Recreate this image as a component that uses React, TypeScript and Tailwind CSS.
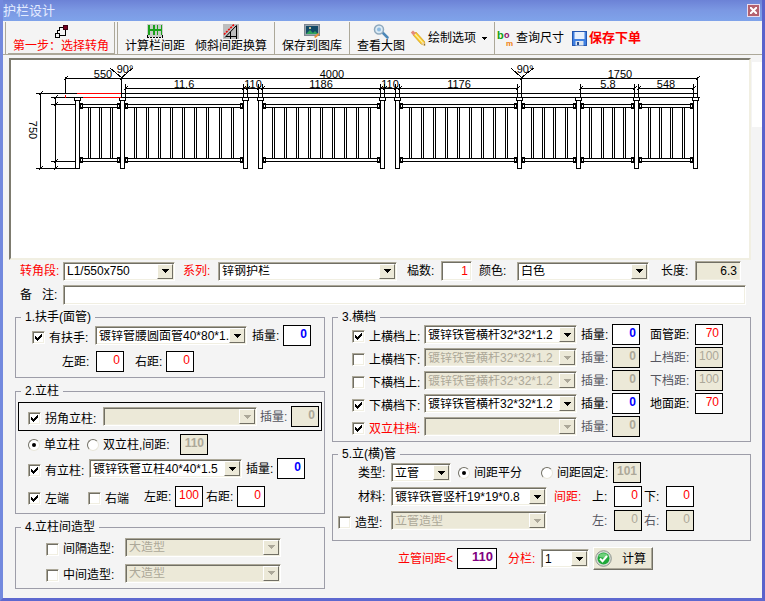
import type { ReactNode } from 'react';
import clsx from 'clsx';

const sunken =
  'border border-t-[#aca899] border-l-[#aca899] border-r-white border-b-white shadow-[inset_1px_1px_0_#716f64,inset_-1px_-1px_0_#f1efe2]';

const STEEL_RAIL = '镀锌铁管横杆32*32*1.2';

function Select({ name, value, disabled, className }: { name: string; value: string; disabled?: boolean; className?: string }) {
  return (
    <div className={clsx('relative h-[19px]', className)}>
      <select
        aria-label={name}
        disabled={disabled}
        className={clsx(
          'block h-full w-full appearance-none overflow-hidden pl-[3px] pr-4 leading-none opacity-100 outline-none',
          sunken,
          disabled ? 'bg-[#ece9d8] text-[#aca899]' : 'bg-white text-black'
        )}
      >
        <option>{value}</option>
      </select>
      <span className="pointer-events-none absolute top-[2px] right-[2px] bottom-[2px] flex w-4 items-center justify-center border border-t-white border-l-white border-r-[#716f64] border-b-[#716f64] bg-[#ece9d8]">
        <svg width="7" height="4" viewBox="0 0 7 4" shapeRendering="crispEdges">
          <path d="M0 0h7v1H0zM1 1h5v1H1zM2 2h3v1H2zM3 3h1v1H3z" fill={disabled ? '#aca899' : '#000'} />
        </svg>
      </span>
    </div>
  );
}

interface NumProps {
  label: string;
  value: string;
  labelClass?: string;
  boxClass?: string;
  className?: string;
  disabled?: boolean;
}

function Num({ label, value, labelClass = 'w-[31px]', boxClass = 'w-7', className, disabled }: NumProps) {
  return (
    <label className={clsx('flex flex-none items-center', className)}>
      <span className={clsx('flex-none whitespace-nowrap', labelClass, disabled && 'text-[#55555f]')}>{label}</span>
      <input
        defaultValue={value}
        disabled={disabled}
        className={clsx(
          'h-[21px] border border-black pr-[3px] pb-1 text-right outline-none',
          boxClass,
          disabled ? 'bg-[#ece9d8] text-[#aca899]' : 'bg-white',
          !disabled && !boxClass.includes('text-') && 'text-[#f00]'
        )}
      />
    </label>
  );
}

function Check({ label, checked, className }: { label: string; checked?: boolean; className?: string }) {
  return (
    <label className={clsx('flex flex-none items-center gap-1 whitespace-nowrap pt-1', className)}>
      <span className="relative flex-none">
        <input type="checkbox" defaultChecked={checked} className={clsx('peer block h-[13px] w-[13px] appearance-none bg-white', sunken)} />
        <svg className="pointer-events-none absolute top-[3px] left-[3px] opacity-0 peer-checked:opacity-100" width="7" height="7" viewBox="0 0 7 7" shapeRendering="crispEdges">
          <path d="M0 2h1v3H0zM1 3h1v3H1zM2 4h1v3H2zM3 3h1v3H3zM4 2h1v3H4zM5 1h1v3H5zM6 0h1v3H6z" />
        </svg>
      </span>
      {label}
    </label>
  );
}

function Radio({ label, name, checked, className }: { label: string; name: string; checked?: boolean; className?: string }) {
  return (
    <label className={clsx('flex flex-none items-center gap-1 whitespace-nowrap pt-px', className)}>
      <span className="relative flex-none">
        <input
          type="radio"
          name={name}
          defaultChecked={checked}
          className="peer block h-3 w-3 appearance-none rounded-full border border-t-[#716f64] border-l-[#716f64] border-r-[#e8e6da] border-b-[#e8e6da] bg-white"
        />
        <span className="pointer-events-none absolute top-1 left-1 h-1 w-1 rounded-full bg-black opacity-0 peer-checked:opacity-100" />
      </span>
      {label}
    </label>
  );
}

function Group({ title, className, children }: { title: string; className?: string; children: ReactNode }) {
  return (
    <fieldset className="min-w-0 border border-[#9d9da8]">
      <legend className="ml-[5px] h-[14px] px-1 leading-[14px]">{title}</legend>
      <div className={clsx('flex flex-col', className)}>{children}</div>
    </fieldset>
  );
}

function Sep() {
  return <span className="mx-[2px] w-px flex-none bg-[#aca899]" />;
}

function Tool({ icon, children, className }: { icon: ReactNode; children: ReactNode; className?: string }) {
  return (
    <button className={clsx('flex flex-none flex-col items-center px-[5px] pt-[2px]', className)}>
      {icon}
      <span className="leading-[14px] whitespace-nowrap">{children}</span>
    </button>
  );
}

function CornerIcon() {
  return (
    <svg width="16" height="15" viewBox="0 0 16 15" shapeRendering="crispEdges" fill="none" stroke="#000">
      <path d="M2.500 9.500h4v4h-4z" />
      <path d="M4.500 9V6.500h2v-3H10M12.500 6v5.500H7" />
      <path d="M10.500 1.500h4v4h-4z" fill="#7a0020" stroke="#3c0010" />
    </svg>
  );
}

function SpacingIcon() {
  return (
    <svg width="16" height="15" viewBox="0 0 16 15" shapeRendering="crispEdges">
      <path d="M0 0h16v13H0z" fill="#c9cdc9" />
      <path d="M1 1h2v10H1zM6 1h2v10H6zM10 1h1v10h-1zM14 1h1v10h-1zM1 5h14v2H1z" fill="#1aa01a" />
      <path d="M0 13.500h16" stroke="#000" strokeDasharray="2 1" />
      <path d="M.5 11v3M15.500 11v3" stroke="#000" />
    </svg>
  );
}

function SlopeIcon() {
  return (
    <svg width="16" height="15" viewBox="0 0 16 15">
      <path d="M0 0h16v15H0z" fill="#bdbdbd" />
      <path d="M2 13.500L13.500 1.500V15M7.500 8v7M3 12.500h11" fill="none" stroke="#000" />
      <path d="M1 10.500L11 .5" stroke="#e00" strokeWidth="1.500" strokeDasharray="2 1" />
    </svg>
  );
}

function GalleryIcon() {
  return (
    <svg width="16" height="15" viewBox="0 0 16 15">
      <rect x=".5" y=".5" width="15" height="11" fill="#9aa4ae" stroke="#7d8790" />
      <rect x="2" y="2" width="12" height="8" fill="#124a66" />
      <path d="M2 10l4-4 3 3 2-2 3 3z" fill="#2fa35a" />
      <circle cx="6" cy="4" r="1" fill="#ffe9a0" />
      <path d="M10 13l4-4 1.500 1.500-4 3.500z" fill="#e8913a" />
    </svg>
  );
}

function MagnifierIcon() {
  return (
    <svg width="16" height="15" viewBox="0 0 16 15" fill="none">
      <path d="M9.500 8.500l5 5" stroke="#4d88b8" strokeWidth="2.500" strokeLinecap="round" />
      <circle cx="6" cy="5.500" r="4.500" fill="#dcebf5" stroke="#8fa9bd" strokeWidth="1.500" />
      <circle cx="6" cy="5.500" r="2" fill="#8dbbe0" />
    </svg>
  );
}

function PencilIcon() {
  return (
    <svg width="16" height="16" viewBox="0 0 16 16">
      <path d="M3 5l3-3 8.500 9.500.5 4-4-1.500z" fill="#f8c828" stroke="#c99218" strokeWidth=".6" />
      <path d="M4.500 3.500l9 10" stroke="#fdf0a0" strokeWidth="1.200" />
      <path d="M.8 2.500L3 .6l3 2.600-2.700 2.300z" fill="#e58b7c" />
      <path d="M11 14l2.800-2.300 1.200 3.800z" fill="#ecd0a0" />
      <path d="M13.800 14.800l.9-.7.4 1.500z" fill="#333" />
    </svg>
  );
}

function BomIcon() {
  return (
    <svg width="18" height="20" viewBox="0 0 18 20" className="font-bold">
      <text x="0" y="11" fontSize="11" fill="#10a010">b</text>
      <text x="7" y="10" fontSize="9" fill="#8b1060">o</text>
      <text x="9" y="18" fontSize="8" fill="#f08010">m</text>
    </svg>
  );
}

function DiskIcon() {
  return (
    <svg width="15" height="15" viewBox="0 0 15 15">
      <rect x=".5" y=".5" width="14" height="14" fill="#3f7fe0" stroke="#2457b0" />
      <path d="M2.500 1h10v7h-10z" fill="#e6f0fd" />
      <path d="M3.500 10h8v4.500h-8z" fill="#dfe6ee" />
      <path d="M5 11h2v3H5z" fill="#2b4f90" />
    </svg>
  );
}

function OkIcon() {
  return (
    <svg width="17" height="17" viewBox="0 0 17 17">
      <circle cx="8.500" cy="8.500" r="7.800" fill="#d8dcd8" stroke="#8d958d" />
      <circle cx="8.500" cy="8.500" r="6" fill="#1fa83a" />
      <path d="M3.500 6.500a5.500 5.500 0 0 1 10 0c-3 1.500-7 1.500-10 0z" fill="#6fd07c" />
      <path d="M5 8.500l2.500 2.700L12 6" fill="none" stroke="#fff" strokeWidth="2" />
    </svg>
  );
}

// [left post x, right post x, baluster x positions]
const PANELS: [number, number, number[]][] = [
  [75, 120, [88, 99, 110]],
  [120, 243, [134, 146, 158, 170, 182, 194, 206, 219, 231]],
  [258, 380, [272, 284, 296, 308, 320, 332, 344, 356, 368]],
  [395, 517, [409, 421, 433, 445, 457, 469, 481, 493, 505]],
  [517, 576, [531, 542, 553, 565]],
  [576, 634, [589, 601, 612, 623]],
  [634, 693, [648, 659, 670, 682]],
];
const POSTS = [75, 120, 243, 258, 380, 395, 517, 576, 634, 693];
const MARKS = [125, 243, 247, 258, 262, 380, 384, 395, 399, 517, 580, 634, 638, 693];
const DIMS: [number, number, string][] = [
  [103, 78, '550'],
  [332, 78, '4000'],
  [620, 78, '1750'],
  [184, 88, '11.6'],
  [253, 88, '110'],
  [321, 88, '1186'],
  [390, 88, '110'],
  [459, 88, '1176'],
  [608, 88, '5.8'],
  [666, 88, '548'],
  [125, 73, '90°'],
  [525, 73, '90°'],
];

function Fence() {
  return (
    <svg viewBox="11 60 738 198" className="block w-full" fill="none" stroke="#000">
      <g shapeRendering="crispEdges" transform="translate(.5 .5)">
        <path d="M65 78H697M125 88H517M580 88H634M638 88H693M35 93H76M121 93H697M50 97H82M121 97H699M50 104H79M50 161H75M35 168H76" />
        <path d="M65 76V93M121 77V97M521 77V97M697 76V97M40 93V168M55 97V168" />
        {MARKS.map((x) => (
          <path key={x} d={`M${x} 83V97M${x - 2} 90l4 -4`} />
        ))}
        {[65, 121, 521, 697].map((x) => (
          <path key={x} d={`M${x - 2} 80l4 -4`} />
        ))}
        {[93, 168].map((y) => (
          <path key={y} d={`M38 ${y + 2}l4 -4`} />
        ))}
        {[97, 104, 161, 168].map((y) => (
          <path key={y} d={`M53 ${y + 2}l4 -4`} />
        ))}
        <path d="M110 68L121 77L133 67M511 68L521 77L534 67" />
        {PANELS.map(([left, right, bars]) => (
          <g key={left}>
            <path d={`M${left + 4} 104H${right}M${left + 4} 107H${right}M${left + 4} 158H${right}M${left + 4} 161H${right}`} />
            {[103, 157].map((y) => (
              <path key={y} d={`M${left + 5} ${y}h2v5h-2zM${right - 3} ${y}h2v5h-2z`} />
            ))}
            {bars.map((x) => (
              <path key={x} d={`M${x} 107V158M${x + 2} 107V158`} />
            ))}
          </g>
        ))}
        {POSTS.map((x) => (
          <path key={x} d={`M${x} 100h4v68h-4zM${x - 1} 97h6v3h-6z`} fill="#fff" />
        ))}
        <path d="M76 93H120M82 97H120M65 94V97" stroke="#f00" />
      </g>
      <g fill="#000" stroke="none" fontSize="11" textAnchor="middle">
        {DIMS.map(([x, y, text]) => (
          <text key={x} x={x} y={y}>
            {text}
          </text>
        ))}
        <text transform="translate(29 130) rotate(90)">750</text>
      </g>
    </svg>
  );
}

const CROSSBARS = [
  { name: '上横档上:', on: true, gap: '面管距:', dist: '70' },
  { name: '上横档下:', on: false, gap: '上档距:', dist: '100' },
  { name: '下横档上:', on: false, gap: '下档距:', dist: '100' },
  { name: '下横档下:', on: true, gap: '地面距:', dist: '70' },
];

const blueBox = 'w-7 font-bold text-[#00f]';

export default function App() {
  return (
    <div className="flex min-h-screen flex-col border-x-[3px] border-b-[3px] border-l-[#7389de] border-r-[#5a62cb] border-b-[#5d68cf] bg-[#f4f4f4] font-['Liberation_Sans','Noto_Sans_CJK_SC',sans-serif] text-[12px] leading-4 text-black">
      <header className="flex h-[21px] items-center justify-between bg-linear-to-b from-[#6c82d6] via-[#7b98e3] to-[#7fa3ea] pr-[2px]">
        <h1 className="text-[13px] text-[#e3ebff]">护栏设计</h1>
        <button aria-label="×" className="flex h-[13px] w-[13px] items-center justify-center border border-[#e8dcee] bg-[#b4606e]">
          <svg width="7" height="7" viewBox="0 0 7 7" stroke="#fff" strokeWidth="2">
            <path d="M0 0l7 7M7 0L0 7" />
          </svg>
        </button>
      </header>

      <nav className="flex h-[34px] items-stretch border-b border-[#aca899] pt-px">
        <Sep />
        <Tool icon={<CornerIcon />} className="border-r border-b border-[#aca899] text-[#f00]">
          第一步：选择转角
        </Tool>
        <Sep />
        <Tool icon={<SpacingIcon />}>计算栏间距</Tool>
        <Tool icon={<SlopeIcon />}>倾斜间距换算</Tool>
        <Sep />
        <Tool icon={<GalleryIcon />}>保存到图库</Tool>
        <Sep />
        <Tool icon={<MagnifierIcon />}>查看大图</Tool>
        <button className="flex flex-none items-center gap-[2px] pr-[5px] whitespace-nowrap">
          <PencilIcon />
          绘制选项
          <svg className="ml-1" width="5" height="3" viewBox="0 0 5 3" shapeRendering="crispEdges">
            <path d="M0 0h5v1H0zM1 1h3v1H1zM2 2h1v1H2z" />
          </svg>
        </button>
        <Sep />
        <button className="flex flex-none items-center gap-px whitespace-nowrap">
          <BomIcon />
          查询尺寸
        </button>
        <button className="ml-2 flex flex-none items-center gap-[2px] text-[13px] font-bold whitespace-nowrap text-[#f00]">
          <DiskIcon />
          保存下单
        </button>
      </nav>

      <div className="mt-[3px] flex gap-px pl-[6px]">
        <div className="min-w-0 flex-1 border-2 border-t-[#7d7b6f] border-l-[#7d7b6f] border-r-[#f1efe2] border-b-[#f1efe2] bg-white">
          <Fence />
        </div>
        <div className="mt-1 h-[65px] w-[10px] flex-none bg-white" />
      </div>

      <main className="pt-px pr-[11px] pl-3">
        <div className="flex h-5 items-center pr-[10px] pl-[5px]">
          <span className="w-[43px] flex-none text-[#f00]">转角段:</span>
          <Select name="转角段" value="L1/550x750" className="w-[112px] flex-none" />
          <span className="ml-2 w-[35px] flex-none text-[#f00]">系列:</span>
          <Select name="系列" value="锌钢护栏" className="min-w-0 flex-1" />
          <label className="ml-[10px] flex flex-none items-center">
            <span className="w-[34px]">榀数:</span>
            <input defaultValue="1" className={clsx('h-5 w-[31px] bg-white pr-[3px] text-right text-[#f00]', sunken)} />
          </label>
          <span className="ml-[7px] w-[38px] flex-none">颜色:</span>
          <Select name="颜色" value="白色" className="w-[132px] flex-none" />
          <label className="ml-3 flex flex-none items-center">
            <span className="w-[34px]">长度:</span>
            <input defaultValue="6.3" readOnly className={clsx('h-5 w-[46px] bg-[#ece9d8] pr-[3px] text-right', sunken)} />
          </label>
        </div>
        <label className="mt-1 flex items-center pr-[5px] pl-[5px]">
          <span className="w-[43px] flex-none whitespace-pre">{'备   注:'}</span>
          <input className={clsx('h-5 min-w-0 flex-1 bg-white px-1', sunken)} />
        </label>

        <div className="mt-[5px] flex gap-[7px]">
          <div className="flex min-w-0 flex-[310] flex-col gap-[6px]">
            <Group title="1.扶手(面管)" className="gap-[5px] pt-px pb-[5px]">
              <div className="flex items-center pr-[13px] pl-4">
                <Check label="有扶手:" checked className="w-[63px]" />
                <Select name="有扶手" value="镀锌管腰圆面管40*80*1." className="min-w-0 flex-1" />
                <Num label="插量:" value="0" boxClass={blueBox} className="ml-[5px]" />
              </div>
              <div className="flex items-center pl-[46px]">
                <Num label="左距:" value="0" labelClass="w-[34px]" />
                <Num label="右距:" value="0" className="ml-[11px]" />
              </div>
            </Group>

            <Group title="2.立柱" className="gap-[3px] pt-1 pb-[6px]">
              <div className="mx-[2px] flex items-center border border-black py-[3px] pr-[2px] pl-[9px]">
                <Check label="拐角立柱:" checked className="w-[75px]" />
                <Select name="拐角立柱" value="" disabled className="min-w-0 flex-1" />
                <Num label="插量:" value="0" disabled boxClass="w-7 font-bold" className="ml-[3px]" />
              </div>
              <div className="flex items-center pl-3">
                <Radio name="post" label="单立柱" checked className="w-[59px]" />
                <Radio name="post" label="双立柱,间距:" className="w-[93px]" />
                <input aria-label="双立柱,间距" defaultValue="110" disabled className="h-[21px] w-7 border border-black bg-[#ece9d8] pr-[3px] pb-1 text-right font-bold text-[#aca899]" />
              </div>
              <div className="flex items-center pr-[19px] pl-3">
                <Check label="有立柱:" checked className="w-[61px]" />
                <Select name="有立柱" value="镀锌铁管立柱40*40*1.5" className="min-w-0 flex-1" />
                <Num label="插量:" value="0" boxClass={blueBox} className="ml-1" />
              </div>
              <div className="mt-1 flex items-center pl-3">
                <Check label="左端" checked className="w-[60px]" />
                <Check label="右端" className="w-14" />
                <Num label="左距:" value="100" />
                <Num label="右距:" value="0" className="ml-[3px]" />
              </div>
            </Group>

            <Group title="4.立柱间造型" className="gap-[6px] pt-[3px] pb-[5px]">
              {['间隔造型', '中间造型'].map((name) => (
                <div key={name} className="flex items-center pr-[43px] pl-[30px]">
                  <Check label={`${name}:`} className="w-[79px]" />
                  <Select name={name} value="大造型" disabled className="min-w-0 flex-1" />
                </div>
              ))}
            </Group>
          </div>

          <div className="flex min-w-0 flex-[419] flex-col gap-[5px]">
            <Group title="3.横档" className="gap-[2px] pb-1">
              {CROSSBARS.map((bar) => (
                <div key={bar.name} className="flex items-center pr-[27px] pl-[19px]">
                  <Check label={bar.name} checked={bar.on} className="w-[72px]" />
                  <Select name={bar.name} value={STEEL_RAIL} disabled={!bar.on} className="min-w-0 flex-1" />
                  <Num label="插量:" value="0" disabled={!bar.on} boxClass={bar.on ? blueBox : 'w-7 font-bold'} className="ml-1" />
                  <Num label={bar.gap} value={bar.dist} disabled={!bar.on} labelClass="w-[45px]" className="ml-[10px]" />
                </div>
              ))}
              <div className="flex items-center pr-[27px] pl-[19px]">
                <Check label="双立柱档:" checked className="w-[72px] text-[#f00]" />
                <Select name="双立柱档" value="" disabled className="min-w-0 flex-1" />
                <Num label="插量:" value="0" disabled boxClass="w-7 font-bold" className="ml-1" />
                <span className="w-[83px] flex-none" />
              </div>
            </Group>

            <Group title="5.立(横)管" className="gap-[3px] pt-px pb-[9px]">
              <div className="flex items-center pl-[25px]">
                <span className="w-[33px] flex-none">类型:</span>
                <Select name="类型" value="立管" className="w-[60px] flex-none" />
                <Radio name="spacing" label="间距平分" checked className="ml-[7px] w-[83px]" />
                <Radio name="spacing" label="间距固定:" className="w-[72px]" />
                <input aria-label="间距固定" defaultValue="101" disabled className="h-[21px] w-7 border border-black bg-[#ece9d8] pr-[3px] pb-1 text-right font-bold text-[#aca899]" />
              </div>
              <div className="flex items-center pr-14 pl-[25px]">
                <span className="w-[33px] flex-none">材料:</span>
                <Select name="材料" value="镀锌铁管竖杆19*19*0.8" className="min-w-0 flex-1" />
                <span className="ml-[7px] w-[38px] flex-none text-[#f00]">间距:</span>
                <Num label="上:" value="0" labelClass="w-[22px]" />
                <Num label="下:" value="0" labelClass="w-[22px]" className="ml-[2px]" />
              </div>
              <div className="flex items-center pr-14 pl-[5px]">
                <Check label="造型:" className="w-[53px]" />
                <Select name="造型" value="立管造型" disabled className="min-w-0 flex-1" />
                <span className="ml-[7px] w-[38px] flex-none" />
                <Num label="左:" value="0" disabled labelClass="w-[22px]" />
                <Num label="右:" value="0" disabled labelClass="w-[22px]" className="ml-[2px]" />
              </div>
            </Group>

            <div className="flex items-center pt-px pl-[66px]">
              <Num label="立管间距<" value="110" labelClass="w-[59px] text-[#f00]" boxClass="w-10 text-[13px] font-bold text-[#800080]" />
              <span className="ml-[11px] w-[33px] flex-none text-[#f00]">分栏:</span>
              <Select name="分栏" value="1" className="w-12 flex-none" />
              <button className="ml-1 flex h-[23px] w-[60px] flex-none items-center gap-[10px] border border-t-white border-l-white border-r-[#716f64] border-b-[#716f64] bg-[#ece9d8] pl-px whitespace-nowrap shadow-[inset_-1px_-1px_0_#aca899]">
                <OkIcon />
                计算
              </button>
            </div>
          </div>
        </div>
      </main>
    </div>
  );
}
